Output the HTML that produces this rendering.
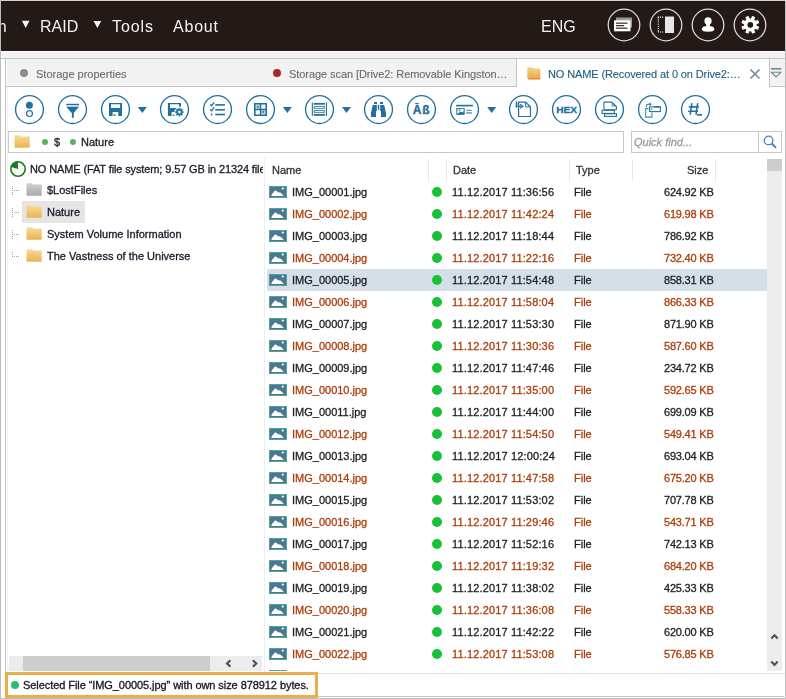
<!DOCTYPE html>
<html><head><meta charset="utf-8">
<style>
*{margin:0;padding:0;box-sizing:border-box}
html,body{width:786px;height:699px;overflow:hidden;background:#fff}
body{position:relative;font-family:"Liberation Sans",sans-serif;font-size:11px;color:#1e1e1e}
.a{position:absolute}
.t{position:absolute;white-space:nowrap;line-height:1;-webkit-text-stroke:0.3px currentColor;will-change:transform}
.m{font-size:16px;color:#f2f2f2;-webkit-text-stroke:0}
.tb{-webkit-text-stroke:0.1px currentColor}
.r{font-size:11px}
.o{color:#ab3e0c}
.k{color:#1e1e1e}
</style></head><body>

<div class="a" style="left:0;top:0;width:786px;height:1px;background:#d4d4d4"></div>
<div class="a" style="left:0;top:0;width:1px;height:699px;background:#bdbdbd"></div>
<div class="a" style="left:785px;top:0;width:1px;height:699px;background:#bdbdbd"></div>
<div class="a" style="left:0;top:698px;width:786px;height:1px;background:#bdbdbd"></div>
<div class="a" style="left:1px;top:1px;width:784px;height:50px;background:#231917;overflow:hidden">
<span class="t m" style="left:-45px;top:18px">Search</span>
<svg class="a" style="left:19px;top:18px" width="12" height="11" viewBox="0 0 12 11"><path d="M1.9 1.7H9.5L5.7 9Z" fill="#f2f2f2"/></svg>
<span class="t m" style="left:39px;top:18px">RAID</span>
<svg class="a" style="left:91px;top:18px" width="12" height="11" viewBox="0 0 12 11"><path d="M1.5 2H9.3L5.4 9Z" fill="#f2f2f2"/></svg>
<span class="t m" style="left:111px;top:18px;letter-spacing:0.9px">Tools</span>
<span class="t m" style="left:172px;top:18px;letter-spacing:0.8px">About</span>
<span class="t m" style="left:540px;top:18px">ENG</span>
</div>
<svg class="a" style="left:607px;top:8px" width="34" height="34" viewBox="0 0 34 34"><circle cx="17" cy="17" r="15.8" fill="none" stroke="#dcdcdc" stroke-width="1.25"/><rect x="9" y="9.5" width="16" height="10" fill="#9a9a9a"/><rect x="7" y="12.3" width="16.5" height="11" fill="#fff"/><rect x="9" y="14.6" width="11.5" height="1.1" fill="#231917"/><rect x="9" y="17.1" width="8" height="1.1" fill="#231917"/><rect x="9" y="19.6" width="11.5" height="1.1" fill="#231917"/></svg>
<svg class="a" style="left:649px;top:8px" width="34" height="34" viewBox="0 0 34 34"><circle cx="17" cy="17" r="15.8" fill="none" stroke="#dcdcdc" stroke-width="1.25"/><path d="M8.8 9.1H14.6M8.8 24H14.6" stroke="#fff" stroke-width="1.1" stroke-dasharray="1.1 1"/><path d="M9.3 9.1V24" stroke="#fff" stroke-width="1.1" stroke-dasharray="1.1 1.1"/><rect x="16" y="8.5" width="9" height="16.5" fill="#e6e6e6"/></svg>
<svg class="a" style="left:691px;top:8px" width="34" height="34" viewBox="0 0 34 34"><circle cx="17" cy="17" r="15.8" fill="none" stroke="#dcdcdc" stroke-width="1.25"/><ellipse cx="17.05" cy="13.1" rx="3.6" ry="3.75" fill="#fff"/><path d="M10.9 21.3Q10.9 18.1 17.1 18.1Q23.3 18.1 23.3 21.3Q23.3 23.8 17.1 23.8Q10.9 23.8 10.9 21.3Z" fill="#fff"/><rect x="15.2" y="15.5" width="3.8" height="3" fill="#fff"/></svg>
<svg class="a" style="left:733px;top:8px" width="34" height="34" viewBox="0 0 34 34"><circle cx="17" cy="17" r="15.8" fill="none" stroke="#dcdcdc" stroke-width="1.25"/><g transform="translate(17.3 16.8)"><circle r="6.4" fill="#fff"/><rect x="-1.75" y="-9" width="3.5" height="4.3" rx="0.5" fill="#fff" transform="rotate(22.5)"/><rect x="-1.75" y="-9" width="3.5" height="4.3" rx="0.5" fill="#fff" transform="rotate(67.5)"/><rect x="-1.75" y="-9" width="3.5" height="4.3" rx="0.5" fill="#fff" transform="rotate(112.5)"/><rect x="-1.75" y="-9" width="3.5" height="4.3" rx="0.5" fill="#fff" transform="rotate(157.5)"/><rect x="-1.75" y="-9" width="3.5" height="4.3" rx="0.5" fill="#fff" transform="rotate(202.5)"/><rect x="-1.75" y="-9" width="3.5" height="4.3" rx="0.5" fill="#fff" transform="rotate(247.5)"/><rect x="-1.75" y="-9" width="3.5" height="4.3" rx="0.5" fill="#fff" transform="rotate(292.5)"/><rect x="-1.75" y="-9" width="3.5" height="4.3" rx="0.5" fill="#fff" transform="rotate(337.5)"/><circle r="2.9" fill="#231917"/></g></svg>
<div class="a" style="left:1px;top:51px;width:784px;height:1px;background:#fff"></div>
<div class="a" style="left:2px;top:52px;width:783px;height:6px;background:#f2f2f2"></div>
<div class="a" style="left:1px;top:58px;width:784px;height:1px;background:#c4c4c4"></div>
<div class="a" style="left:7px;top:87px;width:1px;height:585px;background:#f3f3f3"></div>
<div class="a" style="left:5px;top:58px;width:1px;height:614px;background:#c4c4c4"></div>
<div class="a" style="left:7px;top:59px;width:509px;height:27px;background:#f2f2f2"></div>
<div class="a" style="left:5px;top:86px;width:512px;height:1px;background:#c4c4c4"></div>
<div class="a" style="left:516px;top:58px;width:1px;height:29px;background:#c4c4c4"></div>
<div class="a" style="left:769px;top:58px;width:1px;height:29px;background:#c4c4c4"></div>
<div class="a" style="left:770px;top:59px;width:15px;height:27px;background:#f2f2f2"></div>
<div class="a" style="left:769px;top:86px;width:16px;height:1px;background:#c4c4c4"></div>
<div class="a" style="left:20px;top:69px;width:8px;height:8px;border-radius:50%;background:#8c8c8c"></div>
<span class="t tb" style="left:36px;top:69px;color:#666a6e">Storage properties</span>
<div class="a" style="left:273px;top:69px;width:8px;height:8px;border-radius:50%;background:#a82828"></div>
<span class="t tb" style="left:289px;top:69px;color:#666a6e;letter-spacing:-0.07px">Storage scan [Drive2: Removable Kingston…</span>
<svg class="a" style="left:527px;top:67px" width="14" height="13" viewBox="0 0 14 13"><defs><linearGradient id="tf" x1="0" y1="0" x2="0" y2="1"><stop offset="0" stop-color="#f6d48c"/><stop offset="1" stop-color="#e9a945"/></linearGradient></defs><rect x="1.3" y="11" width="11.9" height="1.4" fill="#d4521e"/><rect x="12.3" y="2.5" width="1" height="9.5" fill="#de6a2c" opacity="0.7"/><path d="M0.3 1.2Q0.3 0.3 1.2 0.3H5.2L6.2 1.3H12Q12.7 1.3 12.7 2.1V11.2Q12.7 11.8 12 11.8H1Q0.3 11.8 0.3 11.1Z" fill="url(#tf)"/></svg>
<span class="t tb" style="left:548px;top:69px;color:#1d5a7f;letter-spacing:-0.12px">NO NAME (Recovered at 0 on Drive2:…</span>
<svg class="a" style="left:749px;top:68px" width="12" height="12" viewBox="0 0 12 12"><path d="M1.5 1.5L10.5 10.5M10.5 1.5L1.5 10.5" stroke="#6f8893" stroke-width="1.6"/></svg>
<svg class="a" style="left:770px;top:66px" width="14" height="14" viewBox="0 0 14 14"><rect x="1" y="2" width="10.2" height="1.6" fill="#6f8893"/><path d="M1.4 6.2H10.8L6.1 10.9Z" fill="none" stroke="#6f8893" stroke-width="1.1"/></svg>
<svg class="a" style="left:14px;top:94px" width="32" height="32" viewBox="0 0 32 32"><g transform="translate(0.00 0)"><circle cx="15.5" cy="15.5" r="13.95" fill="none" stroke="#21709f" stroke-width="1.35"/><circle cx="15.4" cy="11.25" r="3.5" fill="#21709f"/><circle cx="15.5" cy="19.55" r="2.95" fill="none" stroke="#21709f" stroke-width="1.2"/></g></svg>
<svg class="a" style="left:57px;top:94px" width="32" height="32" viewBox="0 0 32 32"><g transform="translate(0.00 0)"><circle cx="15.5" cy="15.5" r="13.95" fill="none" stroke="#21709f" stroke-width="1.35"/><rect x="9.2" y="9.8" width="12.8" height="1.3" fill="#21709f"/><rect x="9.2" y="11.3" width="12.8" height="1" fill="#bcd3e3"/><path d="M9.2 12.8H22L16.9 18.8H14.4Z" fill="#21709f"/><rect x="14.9" y="18" width="1.9" height="5.8" fill="#21709f"/></g></svg>
<svg class="a" style="left:100px;top:94px" width="32" height="32" viewBox="0 0 32 32"><g transform="translate(0.00 0)"><circle cx="15.5" cy="15.5" r="13.95" fill="none" stroke="#21709f" stroke-width="1.35"/><path d="M9 9H22V22H18.3V18H12.6V22H9Z M11 10.3V14H20.1V10.3Z" fill="#21709f" fill-rule="evenodd"/><rect x="13.5" y="20.3" width="2" height="1.5" fill="#21709f"/></g></svg>
<svg class="a" style="left:136px;top:105px" width="12" height="10" viewBox="0 0 12 10"><path d="M1.80 2H10.80L6.30 8Z" fill="#21709f"/></svg>
<svg class="a" style="left:159px;top:94px" width="32" height="32" viewBox="0 0 32 32"><g transform="translate(0.00 0)"><circle cx="15.5" cy="15.5" r="13.95" fill="none" stroke="#21709f" stroke-width="1.35"/><path d="M8.9 8.9H22V12.8H20.1V10.3H11V14H17.6L15.6 16.6V18.1H12.6V22H8.9Z" fill="#21709f"/><rect x="13.7" y="20.6" width="2" height="1.2" fill="#21709f"/><g transform="translate(20.4 18.1)"><g fill="#21709f"><rect x="-0.85" y="-4.2" width="1.7" height="8.4" transform="rotate(0)"/><rect x="-0.85" y="-4.2" width="1.7" height="8.4" transform="rotate(45)"/><rect x="-0.85" y="-4.2" width="1.7" height="8.4" transform="rotate(90)"/><rect x="-0.85" y="-4.2" width="1.7" height="8.4" transform="rotate(135)"/><circle r="3"/></g><circle r="1.3" fill="#fff"/></g></g></svg>
<svg class="a" style="left:202px;top:94px" width="32" height="32" viewBox="0 0 32 32"><g transform="translate(0.00 0)"><circle cx="15.5" cy="15.5" r="13.95" fill="none" stroke="#21709f" stroke-width="1.35"/><path d="M8.2 10.5L9.7 11.8L12 8.3 M8.2 15.5L9.7 16.8L12 13.3" fill="none" stroke="#21709f" stroke-width="1.4"/><circle cx="9.6" cy="20.5" r="0.9" fill="#21709f"/><rect x="13.3" y="10.1" width="9.6" height="1.6" fill="#21709f"/><rect x="13.3" y="15" width="9.6" height="1.6" fill="#21709f"/><rect x="13.3" y="19.7" width="9.6" height="1.6" fill="#21709f"/></g></svg>
<svg class="a" style="left:245px;top:94px" width="32" height="32" viewBox="0 0 32 32"><g transform="translate(0.00 0)"><circle cx="15.5" cy="15.5" r="13.95" fill="none" stroke="#21709f" stroke-width="1.35"/><path d="M9 9H22V22H9Z M10.6 10.6V14.8H14.8V10.6Z M16.3 10.6V14.8H20.4V10.6Z M10.6 16.3V20.4H14.8V16.3Z M16.3 16.3V20.4H20.4V16.3Z" fill="#21709f" fill-rule="evenodd"/><path d="M10.6 10.6H14.8V14.8H10.6Z M16.3 16.3H20.4V20.4H16.3Z" fill="#21709f" opacity="0.35"/><rect x="11.6" y="11.6" width="2" height="2" fill="#fff"/><rect x="17.3" y="17.3" width="2" height="2" fill="#fff"/><circle cx="12.8" cy="12.8" r="1" fill="#21709f"/><circle cx="18.2" cy="18" r="1" fill="#21709f"/></g></svg>
<svg class="a" style="left:281px;top:105px" width="12" height="10" viewBox="0 0 12 10"><path d="M1.90 2H10.90L6.40 8Z" fill="#21709f"/></svg>
<svg class="a" style="left:304px;top:94px" width="32" height="32" viewBox="0 0 32 32"><g transform="translate(0.00 0)"><circle cx="15.5" cy="15.5" r="13.95" fill="none" stroke="#21709f" stroke-width="1.35"/><rect x="7.8" y="8.6" width="1.1" height="13.2" fill="#21709f"/><rect x="21.9" y="8.6" width="1.1" height="13.2" fill="#21709f"/><rect x="9.7" y="8.9" width="11.2" height="1.8" fill="#21709f"/><rect x="9.7" y="19.9" width="11.2" height="1.9" fill="#21709f"/><rect x="9.7" y="11.9" width="11.2" height="3" fill="#21709f" opacity="0.8"/><rect x="10.8" y="13" width="9" height="0.9" fill="#fff"/><rect x="9.7" y="15.9" width="11.2" height="3" fill="#21709f" opacity="0.8"/><rect x="10.8" y="17" width="9" height="0.9" fill="#fff"/></g></svg>
<svg class="a" style="left:340px;top:105px" width="12" height="10" viewBox="0 0 12 10"><path d="M2.00 2H11.00L6.50 8Z" fill="#21709f"/></svg>
<svg class="a" style="left:363px;top:94px" width="32" height="32" viewBox="0 0 32 32"><g transform="translate(0.00 0)"><circle cx="15.5" cy="15.5" r="13.95" fill="none" stroke="#21709f" stroke-width="1.35"/><rect x="11" y="8" width="3" height="2" fill="#21709f"/><rect x="17" y="8" width="3" height="2" fill="#21709f"/><path d="M9.8 11H13.8V17.3H13V23H8V19Z" fill="#21709f"/><path d="M21.2 11H17.2V17.3H18V23H23V19Z" fill="#21709f"/><rect x="14.8" y="11" width="1.4" height="4.8" fill="#21709f"/></g></svg>
<svg class="a" style="left:406px;top:94px" width="32" height="32" viewBox="0 0 32 32"><g transform="translate(0.00 0)"><circle cx="15.5" cy="15.5" r="13.95" fill="none" stroke="#21709f" stroke-width="1.35"/><text x="6.8" y="19.9" font-family="Liberation Sans" font-weight="bold" font-size="12" fill="#21709f" stroke="#21709f" stroke-width="0.35">A</text><rect x="9.2" y="8.9" width="3.6" height="1" fill="#21709f"/><text x="16.2" y="19.9" font-family="Liberation Sans" font-weight="bold" font-size="12" fill="#21709f" stroke="#21709f" stroke-width="0.35">ß</text></g></svg>
<svg class="a" style="left:449px;top:94px" width="32" height="32" viewBox="0 0 32 32"><g transform="translate(0.00 0)"><circle cx="15.5" cy="15.5" r="13.95" fill="none" stroke="#21709f" stroke-width="1.35"/><rect x="7.1" y="10.8" width="16.9" height="1.6" fill="#21709f"/><rect x="7.8" y="14.6" width="7.4" height="5.8" fill="none" stroke="#21709f" stroke-width="1"/><path d="M8.3 20L11.5 17.4L13 18.3L14.7 17V20Z" fill="#21709f"/><circle cx="10.5" cy="16.4" r="0.8" fill="#21709f"/><rect x="17.2" y="15.8" width="5.7" height="1" fill="#21709f" opacity="0.85"/><rect x="17.2" y="18.3" width="5.7" height="1.3" fill="#21709f" opacity="0.85"/></g></svg>
<svg class="a" style="left:485px;top:105px" width="12" height="10" viewBox="0 0 12 10"><path d="M2.20 2H11.20L6.70 8Z" fill="#21709f"/></svg>
<svg class="a" style="left:508px;top:94px" width="32" height="32" viewBox="0 0 32 32"><g transform="translate(0.00 0)"><circle cx="15.5" cy="15.5" r="13.95" fill="none" stroke="#21709f" stroke-width="1.35"/><g transform="translate(-1 0)"><path d="M11.6 8.1H18.6L23.5 13V22.5H11.6Z" fill="none" stroke="#21709f" stroke-width="1.2"/><rect x="10.3" y="11" width="0.9" height="2.6" fill="#fff"/><path d="M18.6 8.1V12.8H23.5" fill="none" stroke="#21709f" stroke-width="1"/><rect x="8.7" y="7.6" width="1.6" height="6" fill="#21709f"/><path d="M10.3 12.3H14" stroke="#21709f" stroke-width="1.4"/><path d="M13.2 10.3L15.8 12.3L13.2 14.3" fill="none" stroke="#21709f" stroke-width="1.4"/></g></g></svg>
<svg class="a" style="left:551px;top:94px" width="32" height="32" viewBox="0 0 32 32"><g transform="translate(0.00 0)"><circle cx="15.5" cy="15.5" r="13.95" fill="none" stroke="#21709f" stroke-width="1.35"/><text x="5.2" y="18.8" textLength="20.8" lengthAdjust="spacingAndGlyphs" font-family="Liberation Sans" font-weight="bold" font-size="9.4" fill="#21709f" stroke="#21709f" stroke-width="0.3">HEX</text></g></svg>
<svg class="a" style="left:594px;top:94px" width="32" height="32" viewBox="0 0 32 32"><g transform="translate(0.00 0)"><circle cx="15.5" cy="15.5" r="13.95" fill="none" stroke="#21709f" stroke-width="1.35"/><path d="M9.9 15.4V8.1H17.6L22.4 12.6V15.4" fill="none" stroke="#21709f" stroke-width="1.1"/><path d="M17.6 8.1V12.6H22.4Z" fill="#21709f" opacity="0.6"/><rect x="8.1" y="16.3" width="12.3" height="3.1" fill="none" stroke="#21709f" stroke-width="1.1"/><rect x="10.5" y="19.8" width="12" height="2.6" fill="none" stroke="#21709f" stroke-width="1.1"/><rect x="10" y="15.2" width="12.9" height="1" fill="#21709f"/></g></svg>
<svg class="a" style="left:637px;top:94px" width="32" height="32" viewBox="0 0 32 32"><g transform="translate(0.00 0)"><circle cx="15.5" cy="15.5" r="13.95" fill="none" stroke="#21709f" stroke-width="1.35"/><rect x="12.6" y="12.9" width="10.8" height="4.7" fill="none" stroke="#21709f" stroke-width="1.1"/><rect x="17.2" y="12.2" width="6" height="1.3" fill="#21709f"/><circle cx="14.7" cy="15.3" r="0.8" fill="#21709f"/><path d="M15 18.6V23.1H8.7V14.6H11.6" fill="none" stroke="#21709f" stroke-width="1.05" opacity="0.85"/><path d="M9.3 13.2Q9.3 10.3 11.5 10.3H13" fill="none" stroke="#21709f" stroke-width="1.1" opacity="0.9"/><path d="M12.4 8.5L14.9 10.3L12.4 12.1Z" fill="#21709f"/></g></svg>
<svg class="a" style="left:680px;top:94px" width="32" height="32" viewBox="0 0 32 32"><g transform="translate(0.00 0)"><circle cx="15.5" cy="15.5" r="13.95" fill="none" stroke="#21709f" stroke-width="1.35"/><g stroke="#21709f" stroke-width="1.6" fill="none"><path d="M11.9 9.2L10.2 20.6M17.7 9.2L16 20.6M8.9 12.9H18.8M8.2 17.3H18.1"/></g><rect x="17" y="20.1" width="5" height="1.6" fill="#21709f"/></g></svg>
<div class="a" style="left:8px;top:131px;width:616px;height:22px;border:1px solid #c8c8c8;background:#fff"></div>
<svg class="a" style="left:14px;top:135px" width="16" height="13" viewBox="0 0 16 13"><defs><linearGradient id="g14_135" x1="0" y1="0" x2="0" y2="1"><stop offset="0" stop-color="#f7dc9c"/><stop offset="1" stop-color="#e9b250"/></linearGradient></defs><path d="M0.5 1.2Q0.5 0.3 1.4 0.3H6.2L7.2 1.5H15Q15.7 1.5 15.7 2.3V12.2Q15.7 12.8 15 12.8H1.2Q0.5 12.8 0.5 12.1Z" fill="url(#g14_135)"/></svg>
<div class="a" style="left:42px;top:139px;width:6px;height:6px;border-radius:50%;background:#5cb15c"></div>
<span class="t" style="left:54px;top:137px;color:#222">$</span>
<div class="a" style="left:70px;top:139px;width:6px;height:6px;border-radius:50%;background:#5cb15c"></div>
<span class="t" style="left:81px;top:137px;color:#222">Nature</span>
<div class="a" style="left:631px;top:131px;width:151px;height:22px;border:1px solid #c8c8c8;background:#fff"></div>
<div class="a" style="left:758px;top:131px;width:1px;height:22px;background:#c8c8c8"></div>
<span class="t" style="left:634px;top:137px;color:#9a9a9a;font-style:italic">Quick find...</span>
<svg class="a" style="left:761px;top:133px" width="18" height="18" viewBox="0 0 18 18"><circle cx="7.6" cy="7.4" r="4.3" fill="none" stroke="#3a80c8" stroke-width="1.25"/><path d="M10.7 10.5L15 14.8" stroke="#3a80c8" stroke-width="1.8"/></svg>
<div class="a" style="left:6px;top:153px;width:257px;height:503px;overflow:hidden">
<svg class="a" style="left:3px;top:7px" width="18" height="18" viewBox="0 0 18 18"><circle cx="9" cy="9" r="7.2" fill="none" stroke="#1a7d1a" stroke-width="1.6"/><path d="M9 9L9 1.8A7.2 7.2 0 0 0 2.1 7Z" fill="#1a7d1a"/></svg>
<span class="t" style="left:24px;top:11px;color:#1a1a2a;letter-spacing:-0.12px">NO NAME (FAT file system; 9.57 GB in 21324 files)</span>
<svg class="a" style="left:0;top:0" width="20" height="120"><rect x="6" y="33" width="1" height="1" fill="#a0a0a0"/><rect x="6" y="35" width="1" height="1" fill="#a0a0a0"/><rect x="6" y="37" width="1" height="1" fill="#a0a0a0"/><rect x="6" y="39" width="1" height="1" fill="#a0a0a0"/><rect x="6" y="41" width="1" height="1" fill="#a0a0a0"/><rect x="8" y="37" width="1" height="1" fill="#a0a0a0"/><rect x="10" y="37" width="1" height="1" fill="#a0a0a0"/><rect x="12" y="37" width="1" height="1" fill="#a0a0a0"/></svg>
<svg class="a" style="left:20px;top:30px" width="16" height="13" viewBox="0 0 16 13"><defs><linearGradient id="g20_30" x1="0" y1="0" x2="0" y2="1"><stop offset="0" stop-color="#cfcfcf"/><stop offset="1" stop-color="#a9a9a9"/></linearGradient></defs><path d="M0.5 1.2Q0.5 0.3 1.4 0.3H6.2L7.2 1.5H15Q15.7 1.5 15.7 2.3V12.2Q15.7 12.8 15 12.8H1.2Q0.5 12.8 0.5 12.1Z" fill="url(#g20_30)"/></svg>
<span class="t" style="left:41px;top:32px;color:#1a1a2a">$LostFiles</span>
<div class="a" style="left:16px;top:48px;width:63px;height:22px;background:#e5e5e5"></div>
<svg class="a" style="left:0;top:0" width="20" height="120"><rect x="6" y="55" width="1" height="1" fill="#a0a0a0"/><rect x="6" y="57" width="1" height="1" fill="#a0a0a0"/><rect x="6" y="59" width="1" height="1" fill="#a0a0a0"/><rect x="6" y="61" width="1" height="1" fill="#a0a0a0"/><rect x="6" y="63" width="1" height="1" fill="#a0a0a0"/><rect x="8" y="59" width="1" height="1" fill="#a0a0a0"/><rect x="10" y="59" width="1" height="1" fill="#a0a0a0"/><rect x="12" y="59" width="1" height="1" fill="#a0a0a0"/></svg>
<svg class="a" style="left:20px;top:52px" width="16" height="13" viewBox="0 0 16 13"><defs><linearGradient id="g20_52" x1="0" y1="0" x2="0" y2="1"><stop offset="0" stop-color="#f7dc9c"/><stop offset="1" stop-color="#e9b250"/></linearGradient></defs><path d="M0.5 1.2Q0.5 0.3 1.4 0.3H6.2L7.2 1.5H15Q15.7 1.5 15.7 2.3V12.2Q15.7 12.8 15 12.8H1.2Q0.5 12.8 0.5 12.1Z" fill="url(#g20_52)"/></svg>
<span class="t" style="left:41px;top:54px;color:#1a1a2a">Nature</span>
<svg class="a" style="left:0;top:0" width="20" height="120"><rect x="6" y="77" width="1" height="1" fill="#a0a0a0"/><rect x="6" y="79" width="1" height="1" fill="#a0a0a0"/><rect x="6" y="81" width="1" height="1" fill="#a0a0a0"/><rect x="6" y="83" width="1" height="1" fill="#a0a0a0"/><rect x="6" y="85" width="1" height="1" fill="#a0a0a0"/><rect x="8" y="81" width="1" height="1" fill="#a0a0a0"/><rect x="10" y="81" width="1" height="1" fill="#a0a0a0"/><rect x="12" y="81" width="1" height="1" fill="#a0a0a0"/></svg>
<svg class="a" style="left:20px;top:74px" width="16" height="13" viewBox="0 0 16 13"><defs><linearGradient id="g20_74" x1="0" y1="0" x2="0" y2="1"><stop offset="0" stop-color="#f7dc9c"/><stop offset="1" stop-color="#e9b250"/></linearGradient></defs><path d="M0.5 1.2Q0.5 0.3 1.4 0.3H6.2L7.2 1.5H15Q15.7 1.5 15.7 2.3V12.2Q15.7 12.8 15 12.8H1.2Q0.5 12.8 0.5 12.1Z" fill="url(#g20_74)"/></svg>
<span class="t" style="left:41px;top:76px;color:#1a1a2a">System Volume Information</span>
<svg class="a" style="left:0;top:0" width="20" height="120"><rect x="6" y="99" width="1" height="1" fill="#a0a0a0"/><rect x="6" y="101" width="1" height="1" fill="#a0a0a0"/><rect x="6" y="103" width="1" height="1" fill="#a0a0a0"/><rect x="8" y="103" width="1" height="1" fill="#a0a0a0"/><rect x="10" y="103" width="1" height="1" fill="#a0a0a0"/><rect x="12" y="103" width="1" height="1" fill="#a0a0a0"/></svg>
<svg class="a" style="left:20px;top:96px" width="16" height="13" viewBox="0 0 16 13"><defs><linearGradient id="g20_96" x1="0" y1="0" x2="0" y2="1"><stop offset="0" stop-color="#f7dc9c"/><stop offset="1" stop-color="#e9b250"/></linearGradient></defs><path d="M0.5 1.2Q0.5 0.3 1.4 0.3H6.2L7.2 1.5H15Q15.7 1.5 15.7 2.3V12.2Q15.7 12.8 15 12.8H1.2Q0.5 12.8 0.5 12.1Z" fill="url(#g20_96)"/></svg>
<span class="t" style="left:41px;top:98px;color:#1a1a2a">The Vastness of the Universe</span>
</div>
<div class="a" style="left:9px;top:656px;width:253px;height:15px;background:#ebecee"></div>
<div class="a" style="left:23px;top:656px;width:187px;height:15px;background:#cdcdcd"></div>
<svg class="a" style="left:222px;top:658px" width="40" height="11" viewBox="0 0 40 11"><path d="M8.4 2.4L5 5.5L8.4 8.6" fill="none" stroke="#505050" stroke-width="2.1"/><path d="M30.9 2.4L34.3 5.5L30.9 8.6" fill="none" stroke="#505050" stroke-width="2.1"/></svg>
<div class="a" style="left:264px;top:158px;width:1px;height:515px;background:#eeeeee"></div>
<span class="t" style="left:272px;top:165px;color:#333">Name</span>
<span class="t" style="left:453px;top:165px;color:#333">Date</span>
<span class="t" style="left:576px;top:165px;color:#333">Type</span>
<span class="t" style="left:687px;top:165px;color:#333">Size</span>
<div class="a" style="left:428px;top:159px;width:1px;height:22px;background:#e6e6e6"></div>
<div class="a" style="left:446px;top:159px;width:1px;height:22px;background:#e6e6e6"></div>
<div class="a" style="left:569px;top:159px;width:1px;height:22px;background:#e6e6e6"></div>
<div class="a" style="left:632px;top:159px;width:1px;height:22px;background:#e6e6e6"></div>
<div class="a" style="left:715px;top:159px;width:1px;height:22px;background:#e6e6e6"></div>
<div class="a" style="left:265px;top:181px;width:502px;height:490px;overflow:hidden">
<svg class="a" style="left:4px;top:5px" width="18" height="12" viewBox="0 0 18 12"><rect x="0.5" y="0.5" width="17" height="11" fill="#487893" stroke="#52a394" stroke-width="1"/><path d="M2.4 9.9Q2.3 7.9 3.9 6.9Q5 4.6 6.6 4.5Q8 4.5 8.9 6.6Q10 5.9 11.2 6.6Q12.6 7.6 14.8 9.9Z" fill="#fff"/><circle cx="13.8" cy="2.6" r="1.1" fill="#fff"/></svg>
<span class="t r k" style="left:27px;top:0px;margin-top:6px">IMG_00001.jpg</span>
<div class="a" style="left:167px;top:6px;width:10px;height:10px;border-radius:50%;background:#19c13a"></div>
<span class="t r k" style="left:187px;top:0px;margin-top:6px;letter-spacing:0.15px">11.12.2017 11:36:56</span>
<span class="t r k" style="left:309px;top:0px;margin-top:6px">File</span>
<span class="t r k" style="right:53px;top:0px;margin-top:6px;letter-spacing:-0.2px">624.92 KB</span>
<svg class="a" style="left:4px;top:27px" width="18" height="12" viewBox="0 0 18 12"><rect x="0.5" y="0.5" width="17" height="11" fill="#487893" stroke="#52a394" stroke-width="1"/><path d="M2.4 9.9Q2.3 7.9 3.9 6.9Q5 4.6 6.6 4.5Q8 4.5 8.9 6.6Q10 5.9 11.2 6.6Q12.6 7.6 14.8 9.9Z" fill="#fff"/><circle cx="13.8" cy="2.6" r="1.1" fill="#fff"/></svg>
<span class="t r o" style="left:27px;top:22px;margin-top:6px">IMG_00002.jpg</span>
<div class="a" style="left:167px;top:28px;width:10px;height:10px;border-radius:50%;background:#19c13a"></div>
<span class="t r o" style="left:187px;top:22px;margin-top:6px;letter-spacing:0.15px">11.12.2017 11:42:24</span>
<span class="t r o" style="left:309px;top:22px;margin-top:6px">File</span>
<span class="t r o" style="right:53px;top:22px;margin-top:6px;letter-spacing:-0.2px">619.98 KB</span>
<svg class="a" style="left:4px;top:49px" width="18" height="12" viewBox="0 0 18 12"><rect x="0.5" y="0.5" width="17" height="11" fill="#487893" stroke="#52a394" stroke-width="1"/><path d="M2.4 9.9Q2.3 7.9 3.9 6.9Q5 4.6 6.6 4.5Q8 4.5 8.9 6.6Q10 5.9 11.2 6.6Q12.6 7.6 14.8 9.9Z" fill="#fff"/><circle cx="13.8" cy="2.6" r="1.1" fill="#fff"/></svg>
<span class="t r k" style="left:27px;top:44px;margin-top:6px">IMG_00003.jpg</span>
<div class="a" style="left:167px;top:50px;width:10px;height:10px;border-radius:50%;background:#19c13a"></div>
<span class="t r k" style="left:187px;top:44px;margin-top:6px;letter-spacing:0.15px">11.12.2017 11:18:44</span>
<span class="t r k" style="left:309px;top:44px;margin-top:6px">File</span>
<span class="t r k" style="right:53px;top:44px;margin-top:6px;letter-spacing:-0.2px">786.92 KB</span>
<svg class="a" style="left:4px;top:71px" width="18" height="12" viewBox="0 0 18 12"><rect x="0.5" y="0.5" width="17" height="11" fill="#487893" stroke="#52a394" stroke-width="1"/><path d="M2.4 9.9Q2.3 7.9 3.9 6.9Q5 4.6 6.6 4.5Q8 4.5 8.9 6.6Q10 5.9 11.2 6.6Q12.6 7.6 14.8 9.9Z" fill="#fff"/><circle cx="13.8" cy="2.6" r="1.1" fill="#fff"/></svg>
<span class="t r o" style="left:27px;top:66px;margin-top:6px">IMG_00004.jpg</span>
<div class="a" style="left:167px;top:72px;width:10px;height:10px;border-radius:50%;background:#19c13a"></div>
<span class="t r o" style="left:187px;top:66px;margin-top:6px;letter-spacing:0.15px">11.12.2017 11:22:16</span>
<span class="t r o" style="left:309px;top:66px;margin-top:6px">File</span>
<span class="t r o" style="right:53px;top:66px;margin-top:6px;letter-spacing:-0.2px">732.40 KB</span>
<div class="a" style="left:2px;top:88px;width:500px;height:22px;background:#d5dfe8"></div>
<svg class="a" style="left:4px;top:93px" width="18" height="12" viewBox="0 0 18 12"><rect x="0.5" y="0.5" width="17" height="11" fill="#487893" stroke="#52a394" stroke-width="1"/><path d="M2.4 9.9Q2.3 7.9 3.9 6.9Q5 4.6 6.6 4.5Q8 4.5 8.9 6.6Q10 5.9 11.2 6.6Q12.6 7.6 14.8 9.9Z" fill="#fff"/><circle cx="13.8" cy="2.6" r="1.1" fill="#fff"/></svg>
<span class="t r k" style="left:27px;top:88px;margin-top:6px">IMG_00005.jpg</span>
<div class="a" style="left:167px;top:94px;width:10px;height:10px;border-radius:50%;background:#19c13a"></div>
<span class="t r k" style="left:187px;top:88px;margin-top:6px;letter-spacing:0.15px">11.12.2017 11:54:48</span>
<span class="t r k" style="left:309px;top:88px;margin-top:6px">File</span>
<span class="t r k" style="right:53px;top:88px;margin-top:6px;letter-spacing:-0.2px">858.31 KB</span>
<svg class="a" style="left:4px;top:115px" width="18" height="12" viewBox="0 0 18 12"><rect x="0.5" y="0.5" width="17" height="11" fill="#487893" stroke="#52a394" stroke-width="1"/><path d="M2.4 9.9Q2.3 7.9 3.9 6.9Q5 4.6 6.6 4.5Q8 4.5 8.9 6.6Q10 5.9 11.2 6.6Q12.6 7.6 14.8 9.9Z" fill="#fff"/><circle cx="13.8" cy="2.6" r="1.1" fill="#fff"/></svg>
<span class="t r o" style="left:27px;top:110px;margin-top:6px">IMG_00006.jpg</span>
<div class="a" style="left:167px;top:116px;width:10px;height:10px;border-radius:50%;background:#19c13a"></div>
<span class="t r o" style="left:187px;top:110px;margin-top:6px;letter-spacing:0.15px">11.12.2017 11:58:04</span>
<span class="t r o" style="left:309px;top:110px;margin-top:6px">File</span>
<span class="t r o" style="right:53px;top:110px;margin-top:6px;letter-spacing:-0.2px">866.33 KB</span>
<svg class="a" style="left:4px;top:137px" width="18" height="12" viewBox="0 0 18 12"><rect x="0.5" y="0.5" width="17" height="11" fill="#487893" stroke="#52a394" stroke-width="1"/><path d="M2.4 9.9Q2.3 7.9 3.9 6.9Q5 4.6 6.6 4.5Q8 4.5 8.9 6.6Q10 5.9 11.2 6.6Q12.6 7.6 14.8 9.9Z" fill="#fff"/><circle cx="13.8" cy="2.6" r="1.1" fill="#fff"/></svg>
<span class="t r k" style="left:27px;top:132px;margin-top:6px">IMG_00007.jpg</span>
<div class="a" style="left:167px;top:138px;width:10px;height:10px;border-radius:50%;background:#19c13a"></div>
<span class="t r k" style="left:187px;top:132px;margin-top:6px;letter-spacing:0.15px">11.12.2017 11:53:30</span>
<span class="t r k" style="left:309px;top:132px;margin-top:6px">File</span>
<span class="t r k" style="right:53px;top:132px;margin-top:6px;letter-spacing:-0.2px">871.90 KB</span>
<svg class="a" style="left:4px;top:159px" width="18" height="12" viewBox="0 0 18 12"><rect x="0.5" y="0.5" width="17" height="11" fill="#487893" stroke="#52a394" stroke-width="1"/><path d="M2.4 9.9Q2.3 7.9 3.9 6.9Q5 4.6 6.6 4.5Q8 4.5 8.9 6.6Q10 5.9 11.2 6.6Q12.6 7.6 14.8 9.9Z" fill="#fff"/><circle cx="13.8" cy="2.6" r="1.1" fill="#fff"/></svg>
<span class="t r o" style="left:27px;top:154px;margin-top:6px">IMG_00008.jpg</span>
<div class="a" style="left:167px;top:160px;width:10px;height:10px;border-radius:50%;background:#19c13a"></div>
<span class="t r o" style="left:187px;top:154px;margin-top:6px;letter-spacing:0.15px">11.12.2017 11:30:36</span>
<span class="t r o" style="left:309px;top:154px;margin-top:6px">File</span>
<span class="t r o" style="right:53px;top:154px;margin-top:6px;letter-spacing:-0.2px">587.60 KB</span>
<svg class="a" style="left:4px;top:181px" width="18" height="12" viewBox="0 0 18 12"><rect x="0.5" y="0.5" width="17" height="11" fill="#487893" stroke="#52a394" stroke-width="1"/><path d="M2.4 9.9Q2.3 7.9 3.9 6.9Q5 4.6 6.6 4.5Q8 4.5 8.9 6.6Q10 5.9 11.2 6.6Q12.6 7.6 14.8 9.9Z" fill="#fff"/><circle cx="13.8" cy="2.6" r="1.1" fill="#fff"/></svg>
<span class="t r k" style="left:27px;top:176px;margin-top:6px">IMG_00009.jpg</span>
<div class="a" style="left:167px;top:182px;width:10px;height:10px;border-radius:50%;background:#19c13a"></div>
<span class="t r k" style="left:187px;top:176px;margin-top:6px;letter-spacing:0.15px">11.12.2017 11:47:46</span>
<span class="t r k" style="left:309px;top:176px;margin-top:6px">File</span>
<span class="t r k" style="right:53px;top:176px;margin-top:6px;letter-spacing:-0.2px">234.72 KB</span>
<svg class="a" style="left:4px;top:203px" width="18" height="12" viewBox="0 0 18 12"><rect x="0.5" y="0.5" width="17" height="11" fill="#487893" stroke="#52a394" stroke-width="1"/><path d="M2.4 9.9Q2.3 7.9 3.9 6.9Q5 4.6 6.6 4.5Q8 4.5 8.9 6.6Q10 5.9 11.2 6.6Q12.6 7.6 14.8 9.9Z" fill="#fff"/><circle cx="13.8" cy="2.6" r="1.1" fill="#fff"/></svg>
<span class="t r o" style="left:27px;top:198px;margin-top:6px">IMG_00010.jpg</span>
<div class="a" style="left:167px;top:204px;width:10px;height:10px;border-radius:50%;background:#19c13a"></div>
<span class="t r o" style="left:187px;top:198px;margin-top:6px;letter-spacing:0.15px">11.12.2017 11:35:00</span>
<span class="t r o" style="left:309px;top:198px;margin-top:6px">File</span>
<span class="t r o" style="right:53px;top:198px;margin-top:6px;letter-spacing:-0.2px">592.65 KB</span>
<svg class="a" style="left:4px;top:225px" width="18" height="12" viewBox="0 0 18 12"><rect x="0.5" y="0.5" width="17" height="11" fill="#487893" stroke="#52a394" stroke-width="1"/><path d="M2.4 9.9Q2.3 7.9 3.9 6.9Q5 4.6 6.6 4.5Q8 4.5 8.9 6.6Q10 5.9 11.2 6.6Q12.6 7.6 14.8 9.9Z" fill="#fff"/><circle cx="13.8" cy="2.6" r="1.1" fill="#fff"/></svg>
<span class="t r k" style="left:27px;top:220px;margin-top:6px">IMG_00011.jpg</span>
<div class="a" style="left:167px;top:226px;width:10px;height:10px;border-radius:50%;background:#19c13a"></div>
<span class="t r k" style="left:187px;top:220px;margin-top:6px;letter-spacing:0.15px">11.12.2017 11:44:00</span>
<span class="t r k" style="left:309px;top:220px;margin-top:6px">File</span>
<span class="t r k" style="right:53px;top:220px;margin-top:6px;letter-spacing:-0.2px">699.09 KB</span>
<svg class="a" style="left:4px;top:247px" width="18" height="12" viewBox="0 0 18 12"><rect x="0.5" y="0.5" width="17" height="11" fill="#487893" stroke="#52a394" stroke-width="1"/><path d="M2.4 9.9Q2.3 7.9 3.9 6.9Q5 4.6 6.6 4.5Q8 4.5 8.9 6.6Q10 5.9 11.2 6.6Q12.6 7.6 14.8 9.9Z" fill="#fff"/><circle cx="13.8" cy="2.6" r="1.1" fill="#fff"/></svg>
<span class="t r o" style="left:27px;top:242px;margin-top:6px">IMG_00012.jpg</span>
<div class="a" style="left:167px;top:248px;width:10px;height:10px;border-radius:50%;background:#19c13a"></div>
<span class="t r o" style="left:187px;top:242px;margin-top:6px;letter-spacing:0.15px">11.12.2017 11:54:50</span>
<span class="t r o" style="left:309px;top:242px;margin-top:6px">File</span>
<span class="t r o" style="right:53px;top:242px;margin-top:6px;letter-spacing:-0.2px">549.41 KB</span>
<svg class="a" style="left:4px;top:269px" width="18" height="12" viewBox="0 0 18 12"><rect x="0.5" y="0.5" width="17" height="11" fill="#487893" stroke="#52a394" stroke-width="1"/><path d="M2.4 9.9Q2.3 7.9 3.9 6.9Q5 4.6 6.6 4.5Q8 4.5 8.9 6.6Q10 5.9 11.2 6.6Q12.6 7.6 14.8 9.9Z" fill="#fff"/><circle cx="13.8" cy="2.6" r="1.1" fill="#fff"/></svg>
<span class="t r k" style="left:27px;top:264px;margin-top:6px">IMG_00013.jpg</span>
<div class="a" style="left:167px;top:270px;width:10px;height:10px;border-radius:50%;background:#19c13a"></div>
<span class="t r k" style="left:187px;top:264px;margin-top:6px;letter-spacing:0.15px">11.12.2017 12:00:24</span>
<span class="t r k" style="left:309px;top:264px;margin-top:6px">File</span>
<span class="t r k" style="right:53px;top:264px;margin-top:6px;letter-spacing:-0.2px">693.04 KB</span>
<svg class="a" style="left:4px;top:291px" width="18" height="12" viewBox="0 0 18 12"><rect x="0.5" y="0.5" width="17" height="11" fill="#487893" stroke="#52a394" stroke-width="1"/><path d="M2.4 9.9Q2.3 7.9 3.9 6.9Q5 4.6 6.6 4.5Q8 4.5 8.9 6.6Q10 5.9 11.2 6.6Q12.6 7.6 14.8 9.9Z" fill="#fff"/><circle cx="13.8" cy="2.6" r="1.1" fill="#fff"/></svg>
<span class="t r o" style="left:27px;top:286px;margin-top:6px">IMG_00014.jpg</span>
<div class="a" style="left:167px;top:292px;width:10px;height:10px;border-radius:50%;background:#19c13a"></div>
<span class="t r o" style="left:187px;top:286px;margin-top:6px;letter-spacing:0.15px">11.12.2017 11:47:58</span>
<span class="t r o" style="left:309px;top:286px;margin-top:6px">File</span>
<span class="t r o" style="right:53px;top:286px;margin-top:6px;letter-spacing:-0.2px">675.20 KB</span>
<svg class="a" style="left:4px;top:313px" width="18" height="12" viewBox="0 0 18 12"><rect x="0.5" y="0.5" width="17" height="11" fill="#487893" stroke="#52a394" stroke-width="1"/><path d="M2.4 9.9Q2.3 7.9 3.9 6.9Q5 4.6 6.6 4.5Q8 4.5 8.9 6.6Q10 5.9 11.2 6.6Q12.6 7.6 14.8 9.9Z" fill="#fff"/><circle cx="13.8" cy="2.6" r="1.1" fill="#fff"/></svg>
<span class="t r k" style="left:27px;top:308px;margin-top:6px">IMG_00015.jpg</span>
<div class="a" style="left:167px;top:314px;width:10px;height:10px;border-radius:50%;background:#19c13a"></div>
<span class="t r k" style="left:187px;top:308px;margin-top:6px;letter-spacing:0.15px">11.12.2017 11:53:02</span>
<span class="t r k" style="left:309px;top:308px;margin-top:6px">File</span>
<span class="t r k" style="right:53px;top:308px;margin-top:6px;letter-spacing:-0.2px">707.78 KB</span>
<svg class="a" style="left:4px;top:335px" width="18" height="12" viewBox="0 0 18 12"><rect x="0.5" y="0.5" width="17" height="11" fill="#487893" stroke="#52a394" stroke-width="1"/><path d="M2.4 9.9Q2.3 7.9 3.9 6.9Q5 4.6 6.6 4.5Q8 4.5 8.9 6.6Q10 5.9 11.2 6.6Q12.6 7.6 14.8 9.9Z" fill="#fff"/><circle cx="13.8" cy="2.6" r="1.1" fill="#fff"/></svg>
<span class="t r o" style="left:27px;top:330px;margin-top:6px">IMG_00016.jpg</span>
<div class="a" style="left:167px;top:336px;width:10px;height:10px;border-radius:50%;background:#19c13a"></div>
<span class="t r o" style="left:187px;top:330px;margin-top:6px;letter-spacing:0.15px">11.12.2017 11:29:46</span>
<span class="t r o" style="left:309px;top:330px;margin-top:6px">File</span>
<span class="t r o" style="right:53px;top:330px;margin-top:6px;letter-spacing:-0.2px">543.71 KB</span>
<svg class="a" style="left:4px;top:357px" width="18" height="12" viewBox="0 0 18 12"><rect x="0.5" y="0.5" width="17" height="11" fill="#487893" stroke="#52a394" stroke-width="1"/><path d="M2.4 9.9Q2.3 7.9 3.9 6.9Q5 4.6 6.6 4.5Q8 4.5 8.9 6.6Q10 5.9 11.2 6.6Q12.6 7.6 14.8 9.9Z" fill="#fff"/><circle cx="13.8" cy="2.6" r="1.1" fill="#fff"/></svg>
<span class="t r k" style="left:27px;top:352px;margin-top:6px">IMG_00017.jpg</span>
<div class="a" style="left:167px;top:358px;width:10px;height:10px;border-radius:50%;background:#19c13a"></div>
<span class="t r k" style="left:187px;top:352px;margin-top:6px;letter-spacing:0.15px">11.12.2017 11:52:16</span>
<span class="t r k" style="left:309px;top:352px;margin-top:6px">File</span>
<span class="t r k" style="right:53px;top:352px;margin-top:6px;letter-spacing:-0.2px">742.13 KB</span>
<svg class="a" style="left:4px;top:379px" width="18" height="12" viewBox="0 0 18 12"><rect x="0.5" y="0.5" width="17" height="11" fill="#487893" stroke="#52a394" stroke-width="1"/><path d="M2.4 9.9Q2.3 7.9 3.9 6.9Q5 4.6 6.6 4.5Q8 4.5 8.9 6.6Q10 5.9 11.2 6.6Q12.6 7.6 14.8 9.9Z" fill="#fff"/><circle cx="13.8" cy="2.6" r="1.1" fill="#fff"/></svg>
<span class="t r o" style="left:27px;top:374px;margin-top:6px">IMG_00018.jpg</span>
<div class="a" style="left:167px;top:380px;width:10px;height:10px;border-radius:50%;background:#19c13a"></div>
<span class="t r o" style="left:187px;top:374px;margin-top:6px;letter-spacing:0.15px">11.12.2017 11:19:32</span>
<span class="t r o" style="left:309px;top:374px;margin-top:6px">File</span>
<span class="t r o" style="right:53px;top:374px;margin-top:6px;letter-spacing:-0.2px">684.20 KB</span>
<svg class="a" style="left:4px;top:401px" width="18" height="12" viewBox="0 0 18 12"><rect x="0.5" y="0.5" width="17" height="11" fill="#487893" stroke="#52a394" stroke-width="1"/><path d="M2.4 9.9Q2.3 7.9 3.9 6.9Q5 4.6 6.6 4.5Q8 4.5 8.9 6.6Q10 5.9 11.2 6.6Q12.6 7.6 14.8 9.9Z" fill="#fff"/><circle cx="13.8" cy="2.6" r="1.1" fill="#fff"/></svg>
<span class="t r k" style="left:27px;top:396px;margin-top:6px">IMG_00019.jpg</span>
<div class="a" style="left:167px;top:402px;width:10px;height:10px;border-radius:50%;background:#19c13a"></div>
<span class="t r k" style="left:187px;top:396px;margin-top:6px;letter-spacing:0.15px">11.12.2017 11:38:02</span>
<span class="t r k" style="left:309px;top:396px;margin-top:6px">File</span>
<span class="t r k" style="right:53px;top:396px;margin-top:6px;letter-spacing:-0.2px">425.33 KB</span>
<svg class="a" style="left:4px;top:423px" width="18" height="12" viewBox="0 0 18 12"><rect x="0.5" y="0.5" width="17" height="11" fill="#487893" stroke="#52a394" stroke-width="1"/><path d="M2.4 9.9Q2.3 7.9 3.9 6.9Q5 4.6 6.6 4.5Q8 4.5 8.9 6.6Q10 5.9 11.2 6.6Q12.6 7.6 14.8 9.9Z" fill="#fff"/><circle cx="13.8" cy="2.6" r="1.1" fill="#fff"/></svg>
<span class="t r o" style="left:27px;top:418px;margin-top:6px">IMG_00020.jpg</span>
<div class="a" style="left:167px;top:424px;width:10px;height:10px;border-radius:50%;background:#19c13a"></div>
<span class="t r o" style="left:187px;top:418px;margin-top:6px;letter-spacing:0.15px">11.12.2017 11:36:08</span>
<span class="t r o" style="left:309px;top:418px;margin-top:6px">File</span>
<span class="t r o" style="right:53px;top:418px;margin-top:6px;letter-spacing:-0.2px">558.33 KB</span>
<svg class="a" style="left:4px;top:445px" width="18" height="12" viewBox="0 0 18 12"><rect x="0.5" y="0.5" width="17" height="11" fill="#487893" stroke="#52a394" stroke-width="1"/><path d="M2.4 9.9Q2.3 7.9 3.9 6.9Q5 4.6 6.6 4.5Q8 4.5 8.9 6.6Q10 5.9 11.2 6.6Q12.6 7.6 14.8 9.9Z" fill="#fff"/><circle cx="13.8" cy="2.6" r="1.1" fill="#fff"/></svg>
<span class="t r k" style="left:27px;top:440px;margin-top:6px">IMG_00021.jpg</span>
<div class="a" style="left:167px;top:446px;width:10px;height:10px;border-radius:50%;background:#19c13a"></div>
<span class="t r k" style="left:187px;top:440px;margin-top:6px;letter-spacing:0.15px">11.12.2017 11:42:22</span>
<span class="t r k" style="left:309px;top:440px;margin-top:6px">File</span>
<span class="t r k" style="right:53px;top:440px;margin-top:6px;letter-spacing:-0.2px">620.00 KB</span>
<svg class="a" style="left:4px;top:467px" width="18" height="12" viewBox="0 0 18 12"><rect x="0.5" y="0.5" width="17" height="11" fill="#487893" stroke="#52a394" stroke-width="1"/><path d="M2.4 9.9Q2.3 7.9 3.9 6.9Q5 4.6 6.6 4.5Q8 4.5 8.9 6.6Q10 5.9 11.2 6.6Q12.6 7.6 14.8 9.9Z" fill="#fff"/><circle cx="13.8" cy="2.6" r="1.1" fill="#fff"/></svg>
<span class="t r o" style="left:27px;top:462px;margin-top:6px">IMG_00022.jpg</span>
<div class="a" style="left:167px;top:468px;width:10px;height:10px;border-radius:50%;background:#19c13a"></div>
<span class="t r o" style="left:187px;top:462px;margin-top:6px;letter-spacing:0.15px">11.12.2017 11:53:08</span>
<span class="t r o" style="left:309px;top:462px;margin-top:6px">File</span>
<span class="t r o" style="right:53px;top:462px;margin-top:6px;letter-spacing:-0.2px">576.85 KB</span>
<svg class="a" style="left:4px;top:489px" width="18" height="12" viewBox="0 0 18 12"><rect x="0.5" y="0.5" width="17" height="11" fill="#487893" stroke="#52a394" stroke-width="1"/><path d="M2.4 9.9Q2.3 7.9 3.9 6.9Q5 4.6 6.6 4.5Q8 4.5 8.9 6.6Q10 5.9 11.2 6.6Q12.6 7.6 14.8 9.9Z" fill="#fff"/><circle cx="13.8" cy="2.6" r="1.1" fill="#fff"/></svg>
<span class="t r k" style="left:27px;top:484px;margin-top:6px">IMG_00023.jpg</span>
<div class="a" style="left:167px;top:490px;width:10px;height:10px;border-radius:50%;background:#19c13a"></div>
<span class="t r k" style="left:187px;top:484px;margin-top:6px;letter-spacing:0.15px">11.12.2017 11:41:10</span>
<span class="t r k" style="left:309px;top:484px;margin-top:6px">File</span>
<span class="t r k" style="right:53px;top:484px;margin-top:6px;letter-spacing:-0.2px">601.12 KB</span>
</div>
<div class="a" style="left:767px;top:159px;width:15px;height:512px;background:#ebecee"></div>
<div class="a" style="left:767px;top:159px;width:15px;height:12px;background:#cdcdcd"></div>
<svg class="a" style="left:767px;top:630px" width="15" height="40" viewBox="0 0 15 40"><path d="M4.3 8.6L7.5 5.3L10.7 8.6" fill="none" stroke="#505050" stroke-width="2.1"/><path d="M4.3 31.6L7.5 34.9L10.7 31.6" fill="none" stroke="#505050" stroke-width="2.1"/></svg>
<div class="a" style="left:318px;top:673px;width:467px;height:1px;background:#e0e0e0"></div>
<div class="a" style="left:6px;top:696px;width:778px;height:1px;background:#c4c4c4"></div>
<div class="a" style="left:1px;top:672px;width:4px;height:26px;background:#fff"></div>
<div class="a" style="left:5px;top:672px;width:313px;height:26px;border:3px solid #e8b04c;background:#fff"></div>
<div class="a" style="left:11px;top:681px;width:8px;height:8px;border-radius:50%;background:#2dbd6e"></div>
<span class="t" style="left:23px;top:680px;color:#141420;letter-spacing:-0.07px">Selected File “IMG_00005.jpg” with own size 878912 bytes.</span>
</body></html>
